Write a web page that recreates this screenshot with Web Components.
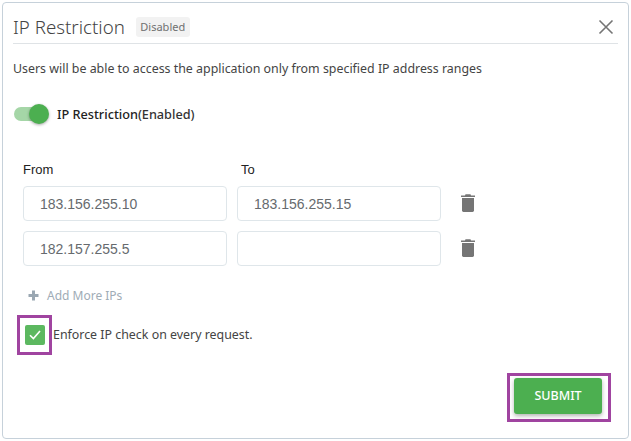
<!DOCTYPE html>
<html>
<head>
<meta charset="utf-8">
<title>IP Restriction</title>
<style>
    html, body { margin: 0; padding: 0; background: #fff; }
</style>
</head>
<body>
<ip-dialog>
    <ip-row from="183.156.255.10" to="183.156.255.15"></ip-row>
    <ip-row from="182.157.255.5" to=""></ip-row>
</ip-dialog>

<script>
class IpRow extends HTMLElement {
    constructor() {
        super();
        const shadow = this.attachShadow({ mode: 'open' });
        shadow.innerHTML = `
            <style>
                :host { display: flex; align-items: center; height: 35px; margin-bottom: 10px; }
                .field {
                    box-sizing: border-box;
                    width: 204px;
                    height: 35px;
                    margin-right: 10px;
                    padding: 0 16px;
                    border: 1px solid #dfe6ea;
                    border-radius: 4px;
                    display: flex;
                    align-items: center;
                    font: 14px 'Liberation Sans', Arial, sans-serif;
                    color: #666a6e;
                }
                svg { display: block; margin-left: 9px; }
            </style>
            <div class="field">${this.getAttribute('from') || ''}</div>
            <div class="field">${this.getAttribute('to') || ''}</div>
            <svg width="16" height="20" viewBox="0 1 16 20" fill="#757575">
                <path d="M5.5 1.2 L10.5 1.2 L11 2.4 L15 2.4 L15 4 L1 4 L1 2.4 L5 2.4 Z"/>
                <path d="M2 5 L14 5 L14 17.6 Q14 19 12.6 19 L3.4 19 Q2 19 2 17.6 Z"/>
            </svg>
        `;
    }
}
customElements.define('ip-row', IpRow);

class IpDialog extends HTMLElement {
    constructor() {
        super();
        const shadow = this.attachShadow({ mode: 'open' });
        shadow.innerHTML = `
            <style>
                :host {
                    display: block;
                    box-sizing: border-box;
                    width: 627px;
                    height: 437px;
                    margin: 2px 0 0 2px;
                    padding: 0 10px;
                    border: 1px solid #c6d1da;
                    border-radius: 4px;
                    font-family: 'Noto Sans', sans-serif;
                    color: #444;
                }
                .header {
                    box-sizing: border-box;
                    display: flex;
                    align-items: center;
                    height: 41px;
                    padding-top: 8px;
                    width: 605px;
                    border-bottom: 1px solid #dfe3e6;
                }
                .title { font-size: 18.7px; font-weight: 300; color: #444; padding-bottom: 2px; }
                .badge {
                    margin-left: 11px;
                    padding: 0 4.5px;
                    height: 20px;
                    line-height: 20px;
                    background: #f2f2f2;
                    border-radius: 3px;
                    font-size: 11px;
                    color: #707070;
                }
                .close { margin-left: auto; margin-right: 4px; display: block; }
                .desc { margin-top: 16px; font-size: 12.4px; line-height: 18px; color: #444; }
                .toggle-row { display: flex; align-items: center; margin-top: 24px; height: 24px; }
                .track {
                    position: relative;
                    width: 34px;
                    height: 14px;
                    margin-left: 1px;
                    border-radius: 7px;
                    background: #a5d6a7;
                }
                .knob {
                    position: absolute;
                    top: -3px;
                    right: -1px;
                    width: 20px;
                    height: 20px;
                    border-radius: 50%;
                    background: #4caf50;
                    box-shadow: 0 1px 3px rgba(0,0,0,.35);
                }
                .toggle-label { margin-left: 9px; font-size: 12.7px; font-weight: 500; color: #222; }
                .toggle-label span { color: #333; }
                .ranges { margin: 31px 0 0 10px; }
                .heads { display: flex; height: 29px; font: 13px/26px 'Liberation Sans', Arial, sans-serif; color: #222; }
                .heads div { width: 204px; margin-right: 10px; }
                .heads div + div { padding-left: 4px; }
                .add {
                    display: flex;
                    align-items: center;
                    margin: 19px 0 0 15px;
                    height: 20px;
                    font-size: 12px;
                    color: #a0acb6;
                }
                .add svg { margin-right: 8px; }
                .check-row { display: flex; align-items: center; margin-top: 10px; height: 40px; }
                .outline {
                    box-sizing: border-box;
                    width: 35px;
                    height: 40px;
                    margin: 0 1px 0 4px;
                    border: 3px solid #a044a0;
                    display: flex;
                    align-items: center;
                    justify-content: center;
                }
                .box {
                    width: 20px;
                    height: 20px;
                    border-radius: 2px;
                    background: #5cb860;
                    display: flex;
                    align-items: center;
                    justify-content: center;
                }
                .check-label { font-size: 12.4px; color: #444; padding-bottom: 2px; }
                .footer { display: flex; justify-content: flex-end; margin-top: 18px; padding-right: 7px; }
                .submit-outline {
                    box-sizing: border-box;
                    width: 104px;
                    height: 49px;
                    padding: 2px 0 0 4px;
                    border: 3px solid #a044a0;
                }
                .submit {
                    display: block;
                    width: 88px;
                    height: 36px;
                    padding: 0 0 2px;
                    border: 0;
                    border-radius: 3px;
                    background: #4caf50;
                    color: #fff;
                    font: 500 12.5px 'Noto Sans', sans-serif;
                    box-shadow: 0 2px 4px rgba(0,0,0,.3);
                }
            </style>
            <div class="header">
                <span class="title">IP Restriction</span>
                <span class="badge">Disabled</span>
                <svg class="close" width="16" height="16" viewBox="0 0 16 16" stroke="#757575" stroke-width="1.6" fill="none">
                    <path d="M1.5 1.5 L14.5 14.5 M14.5 1.5 L1.5 14.5"/>
                </svg>
            </div>
            <div class="desc">Users will be able to access the application only from specified IP address ranges</div>
            <div class="toggle-row">
                <div class="track"><div class="knob"></div></div>
                <div class="toggle-label">IP Restriction<span>(Enabled)</span></div>
            </div>
            <div class="ranges">
                <div class="heads"><div>From</div><div>To</div></div>
                <slot></slot>
            </div>
            <div class="add">
                <svg width="11" height="11" viewBox="0 0 11 11" fill="#9aa7b2"><path d="M4 0.5 H7 V4 H10.5 V7 H7 V10.5 H4 V7 H0.5 V4 H4 Z"/></svg>
                Add More IPs
            </div>
            <div class="check-row">
                <div class="outline">
                    <div class="box">
                        <svg width="12" height="10" viewBox="0 0 12 10" fill="none" stroke="#fff" stroke-width="1.6"><path d="M1 5.2 L4.4 8.6 L11 1"/></svg>
                    </div>
                </div>
                <div class="check-label">Enforce IP check on every request.</div>
            </div>
            <div class="footer">
                <div class="submit-outline"><button class="submit">SUBMIT</button></div>
            </div>
        `;
    }
}
customElements.define('ip-dialog', IpDialog);
</script>
</body>
</html>
